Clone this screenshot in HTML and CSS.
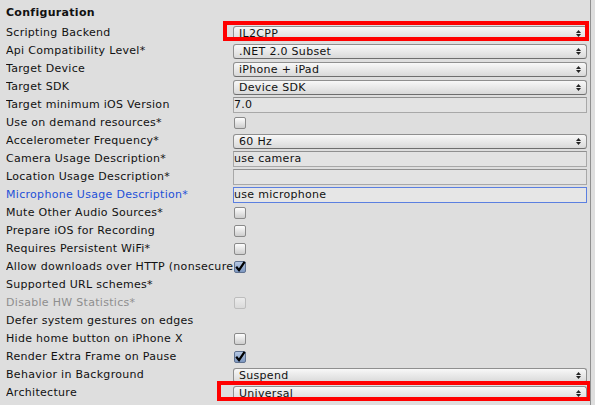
FILE: index.html
```html
<!DOCTYPE html>
<html>
<head>
<meta charset="utf-8">
<link rel="stylesheet" href="styles.css">
</head>
<body>
<div class="panel">
  <div class="header">Configuration</div>

  <div class="row">
    <div class="label">Scripting Backend</div>
    <div class="popup"><span>IL2CPP</span><svg class="arr" width="5" height="7" viewBox="0 0 5 7"><polygon points="0,3 2.5,0 5,3"/><polygon points="0,4 2.5,7 5,4"/></svg></div>
    <div class="mark mark-top"></div>
  </div>
  <div class="row">
    <div class="label">Api Compatibility Level*</div>
    <div class="popup"><span>.NET 2.0 Subset</span><svg class="arr" width="5" height="7" viewBox="0 0 5 7"><polygon points="0,3 2.5,0 5,3"/><polygon points="0,4 2.5,7 5,4"/></svg></div>
  </div>
  <div class="row">
    <div class="label">Target Device</div>
    <div class="popup"><span>iPhone + iPad</span><svg class="arr" width="5" height="7" viewBox="0 0 5 7"><polygon points="0,3 2.5,0 5,3"/><polygon points="0,4 2.5,7 5,4"/></svg></div>
  </div>
  <div class="row">
    <div class="label">Target SDK</div>
    <div class="popup"><span>Device SDK</span><svg class="arr" width="5" height="7" viewBox="0 0 5 7"><polygon points="0,3 2.5,0 5,3"/><polygon points="0,4 2.5,7 5,4"/></svg></div>
  </div>
  <div class="row">
    <div class="label">Target minimum iOS Version</div>
    <div class="field">7.0</div>
  </div>
  <div class="row">
    <div class="label">Use on demand resources*</div>
    <div><div class="check"></div></div>
  </div>
  <div class="row">
    <div class="label">Accelerometer Frequency*</div>
    <div class="popup"><span>60 Hz</span><svg class="arr" width="5" height="7" viewBox="0 0 5 7"><polygon points="0,3 2.5,0 5,3"/><polygon points="0,4 2.5,7 5,4"/></svg></div>
  </div>
  <div class="row">
    <div class="label">Camera Usage Description*</div>
    <div class="field">use camera</div>
  </div>
  <div class="row">
    <div class="label">Location Usage Description*</div>
    <div class="field"></div>
  </div>
  <div class="row">
    <div class="label label-focus">Microphone Usage Description*</div>
    <div class="field field-focus">use microphone</div>
  </div>
  <div class="row">
    <div class="label">Mute Other Audio Sources*</div>
    <div><div class="check"></div></div>
  </div>
  <div class="row">
    <div class="label">Prepare iOS for Recording</div>
    <div><div class="check"></div></div>
  </div>
  <div class="row">
    <div class="label">Requires Persistent WiFi*</div>
    <div><div class="check"></div></div>
  </div>
  <div class="row">
    <div class="label">Allow downloads over HTTP (nonsecure)</div>
    <div><div class="check check-on"><svg class="tick" width="12" height="12" viewBox="0 0 12 12"><path d="M2.2 5.8 L5 9.2 L10.6 0.8"/></svg></div></div>
  </div>
  <div class="row">
    <div class="label"><svg class="caret" width="6" height="8" viewBox="0 0 6 8"><polygon points="-3,1 1.5,4 -3,7"/></svg>Supported URL schemes*</div>
    <div></div>
  </div>
  <div class="row">
    <div class="label label-off">Disable HW Statistics*</div>
    <div><div class="check check-off"></div></div>
  </div>
  <div class="row">
    <div class="label"><svg class="caret" width="6" height="8" viewBox="0 0 6 8"><polygon points="-3,1 1.5,4 -3,7"/></svg>Defer system gestures on edges</div>
    <div></div>
  </div>
  <div class="row">
    <div class="label">Hide home button on iPhone X</div>
    <div><div class="check"></div></div>
  </div>
  <div class="row">
    <div class="label">Render Extra Frame on Pause</div>
    <div><div class="check check-on"><svg class="tick" width="12" height="12" viewBox="0 0 12 12"><path d="M2.2 5.8 L5 9.2 L10.6 0.8"/></svg></div></div>
  </div>
  <div class="row">
    <div class="label">Behavior in Background</div>
    <div class="popup"><span>Suspend</span><svg class="arr" width="5" height="7" viewBox="0 0 5 7"><polygon points="0,3 2.5,0 5,3"/><polygon points="0,4 2.5,7 5,4"/></svg></div>
  </div>
  <div class="row">
    <div class="label">Architecture</div>
    <div class="popup"><span>Universal</span><svg class="arr" width="5" height="7" viewBox="0 0 5 7"><polygon points="0,3 2.5,0 5,3"/><polygon points="0,4 2.5,7 5,4"/></svg></div>
    <div class="mark mark-bottom"></div>
  </div>
</div>
</body>
</html>
```

FILE: styles.css
```css
html, body {
  margin: 0;
  padding: 0;
}
body {
  background: #dedede;
  font-family: "DejaVu Sans", Verdana, sans-serif;
  font-size: 11px;
  letter-spacing: 0.3px;
  color: #111;
  width: 595px;
  height: 405px;
  overflow: hidden;
}
.panel {
  width: 591px;
  height: 405px;
  box-sizing: border-box;
  border-right: 1px solid #8f8f8f;
  padding: 4px 0 0 6px;
  overflow: hidden;
}
.header {
  font-weight: bold;
  height: 18px;
  line-height: 18px;
  margin-bottom: 2px;
}
.row {
  position: relative;
  display: grid;
  grid-template-columns: 227px 354px;
  align-items: center;
  height: 18px;
}
.label {
  display: flex;
  align-items: center;
  white-space: nowrap;
  overflow: hidden;
  line-height: 18px;
}
.caret {
  margin-left: -6px;
  fill: #555;
  flex: none;
}
.label-focus {
  color: #2350d8;
}
.label-off {
  color: #8e8e8e;
}
.popup {
  height: 15px;
  box-sizing: border-box;
  border: 1px solid #8f8f8f;
  border-bottom-color: #6e6e6e;
  border-radius: 3px;
  background: linear-gradient(#f8f8f8, #d9d9d9);
  display: flex;
  align-items: center;
  justify-content: space-between;
  padding: 0 5px;
  line-height: 13px;
}
.arr {
  fill: #222;
}
.field {
  height: 16px;
  box-sizing: border-box;
  border: 1px solid #a8a8a8;
  border-top-color: #909090;
  background: #e3e3e3;
  line-height: 14px;
  white-space: nowrap;
  overflow: hidden;
}
.field-focus {
  border-color: #5b7fe0;
  background: #e6e6e6;
}
.check {
  position: relative;
  width: 12px;
  height: 12px;
  box-sizing: border-box;
  margin-left: 1px;
  border: 1px solid #8a8a8a;
  border-radius: 2px;
  background: linear-gradient(#fdfdfd, #cdcdcd);
}
.check-on {
  border-color: #5f7190;
  background: linear-gradient(#b5c8e4, #7e98c0);
}
.check-off {
  border-color: #bdbdbd;
  background: linear-gradient(#ececec, #dadada);
}
.tick {
  position: absolute;
  left: -1px;
  top: -1px;
  overflow: visible;
  fill: none;
  stroke: #000;
  stroke-width: 2.2;
}
.mark {
  position: absolute;
  box-sizing: border-box;
  border: 4px solid #ff0000;
  pointer-events: none;
}
.mark-top {
  left: 217px;
  top: -3px;
  width: 366px;
  height: 20px;
}
.mark-bottom {
  left: 211px;
  top: -3px;
  width: 374px;
  height: 20px;
}
```
